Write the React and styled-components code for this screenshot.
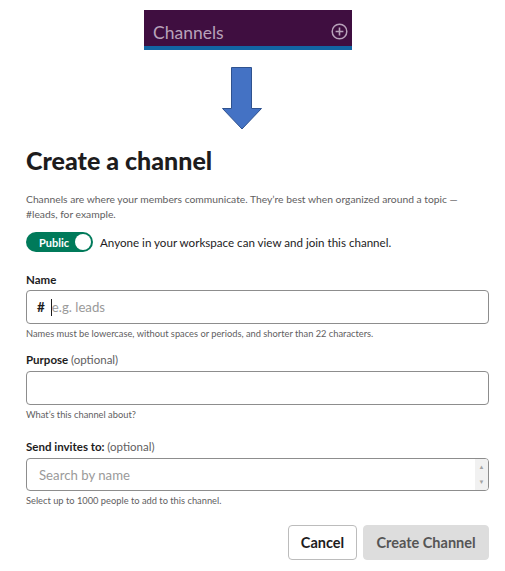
import React from 'react';
import styled, { createGlobalStyle } from 'styled-components';

const GlobalStyle = createGlobalStyle`
  html, body {
    margin: 0;
    padding: 0;
    background: #ffffff;
  }
  body {
    font-family: Lato, "Liberation Sans", sans-serif;
    color: #1d1c1d;
  }
`;

const Page = styled.div`
  width: 505px;
  height: 571px;
  overflow: hidden;
  padding-top: 10px;
  box-sizing: border-box;
`;

// sidebar header crop
const Sidebar = styled.div`
  margin-left: 144px;
  width: 208px;
  height: 40px;
  background: #3f0e40;
  border-bottom: 4px solid #1264a3;
  display: flex;
  align-items: center;
  justify-content: space-between;
  padding: 8px 4px 2px 9px;
  box-sizing: border-box;
`;

const SidebarTitle = styled.span`
  font-family: Lato, "Open Sans", sans-serif;
  font-size: 17.5px;
  color: #b8a2ba;
  margin-top: 2px;
`;

const ArrowWrap = styled.div`
  margin-left: 221px;
  margin-top: 16px;
  width: 42px;
  height: 64px;
`;

const Form = styled.div`
  padding: 0 16px 0 26px;
`;

const Title = styled.h1`
  margin: 14px 0 0;
  font-size: 25px;
  line-height: 32px;
  font-weight: 900;
  color: #1d1c1d;
`;

const Description = styled.p`
  margin: 16px 0 0;
  font-size: 10.3px;
  line-height: 14.5px;
  color: #616061;
`;

const ToggleRow = styled.div`
  display: flex;
  align-items: center;
  gap: 7px;
  margin-top: 11px;
`;

const Toggle = styled.div`
  width: 67px;
  height: 20px;
  border-radius: 10px;
  background: #007a5a;
  display: flex;
  align-items: center;
  justify-content: space-between;
  padding: 0 2px 0 13px;
  box-sizing: border-box;
`;

const ToggleText = styled.span`
  color: #ffffff;
  font-size: 11px;
  font-weight: 700;
`;

const Knob = styled.span`
  width: 16px;
  height: 16px;
  border-radius: 50%;
  background: #ffffff;
`;

const ToggleLabel = styled.span`
  font-size: 11.6px;
  color: #1d1c1d;
`;

const Label = styled.div`
  margin-top: ${(p) => p.$gap}px;
  font-size: 11.5px;
  line-height: 16px;
  font-weight: 700;
  color: #1d1c1d;
`;

const Optional = styled.span`
  font-weight: 400;
  color: #616061;
`;

const InputBox = styled.div`
  margin-top: ${(p) => p.$gap}px;
  height: ${(p) => p.$h}px;
  border: 1px solid #8d8d8d;
  border-radius: 4px;
  display: flex;
  align-items: stretch;
  box-sizing: border-box;
  overflow: hidden;
`;

const InputText = styled.div`
  flex: 1;
  display: flex;
  align-items: center;
  padding-left: ${(p) => p.$pad}px;
  font-size: 13.2px;
  color: #1d1c1d;
`;

const Hash = styled.span`
  font-weight: 700;
  font-size: 13.5px;
  color: #1d1c1d;
  margin-right: 6px;
`;

const Caret = styled.span`
  width: 1px;
  height: 17px;
  background: #1d1c1d;
`;

const Placeholder = styled.span`
  color: #9a9a9a;
`;

const Scrollbar = styled.div`
  width: 13px;
  background: #f1f1f1;
  display: flex;
  flex-direction: column;
  justify-content: space-between;
  align-items: center;
  padding: 4px 0;
  font-size: 6px;
  color: #a3a3a3;
  line-height: 8px;
`;

const Hint = styled.div`
  margin-top: 3px;
  font-size: 9.3px;
  line-height: 14px;
  color: #616061;
`;

const Actions = styled.div`
  display: flex;
  justify-content: flex-end;
  gap: 6px;
  margin-top: 17px;
`;

const Button = styled.button`
  height: 35px;
  padding: 0;
  border-radius: 4px;
  font-family: Lato, "Liberation Sans", sans-serif;
  font-size: 14.5px;
  font-weight: 700;
  white-space: nowrap;
  border: 1px solid ${(p) => (p.$primary ? '#dddddd' : '#bcbcbc')};
  background: ${(p) => (p.$primary ? '#dddddd' : '#ffffff')};
  color: ${(p) => (p.$primary ? '#555555' : '#1d1c1d')};
  width: ${(p) => p.$w}px;
`;

function PlusCircle() {
  return (
    <svg width="17" height="17" viewBox="0 0 17 17">
      <circle cx="8.5" cy="8.5" r="7.3" fill="none" stroke="#b8a2ba" strokeWidth="1.5" />
      <path d="M8.5 4.6v7.8M4.6 8.5h7.8" stroke="#b8a2ba" strokeWidth="1.6" />
    </svg>
  );
}

function DownArrow() {
  return (
    <svg width="42" height="64" viewBox="0 0 42 64">
      <path
        d="M10.5 1.5h20v41h10l-19.5 20.5L1.5 42.5h9z"
        fill="#4472c4"
        stroke="#2f528f"
        strokeWidth="1"
      />
    </svg>
  );
}

export default function App() {
  return (
    <Page>
      <GlobalStyle />
      <Sidebar>
        <SidebarTitle>Channels</SidebarTitle>
        <PlusCircle />
      </Sidebar>
      <ArrowWrap>
        <DownArrow />
      </ArrowWrap>
      <Form>
        <Title>Create a channel</Title>
        <Description>
          Channels are where your members communicate. They’re best when organized around a topic —
          #leads, for example.
        </Description>
        <ToggleRow>
          <Toggle>
            <ToggleText>Public</ToggleText>
            <Knob />
          </Toggle>
          <ToggleLabel>Anyone in your workspace can view and join this channel.</ToggleLabel>
        </ToggleRow>

        <Label $gap={20}>Name</Label>
        <InputBox $gap={2} $h={34}>
          <InputText $pad={10}>
            <Hash>#</Hash>
            <Caret />
            <Placeholder>e.g. leads</Placeholder>
          </InputText>
        </InputBox>
        <Hint>Names must be lowercase, without spaces or periods, and shorter than 22 characters.</Hint>

        <Label $gap={11}>
          Purpose <Optional>(optional)</Optional>
        </Label>
        <InputBox $gap={3} $h={34} />
        <Hint>What’s this channel about?</Hint>

        <Label $gap={17}>
          Send invites to: <Optional>(optional)</Optional>
        </Label>
        <InputBox $gap={3} $h={33}>
          <InputText $pad={12}>
            <Placeholder>Search by name</Placeholder>
          </InputText>
          <Scrollbar>
            <span>▲</span>
            <span>▼</span>
          </Scrollbar>
        </InputBox>
        <Hint>Select up to 1000 people to add to this channel.</Hint>

        <Actions>
          <Button $w={69}>Cancel</Button>
          <Button $primary $w={126}>Create Channel</Button>
        </Actions>
      </Form>
    </Page>
  );
}
